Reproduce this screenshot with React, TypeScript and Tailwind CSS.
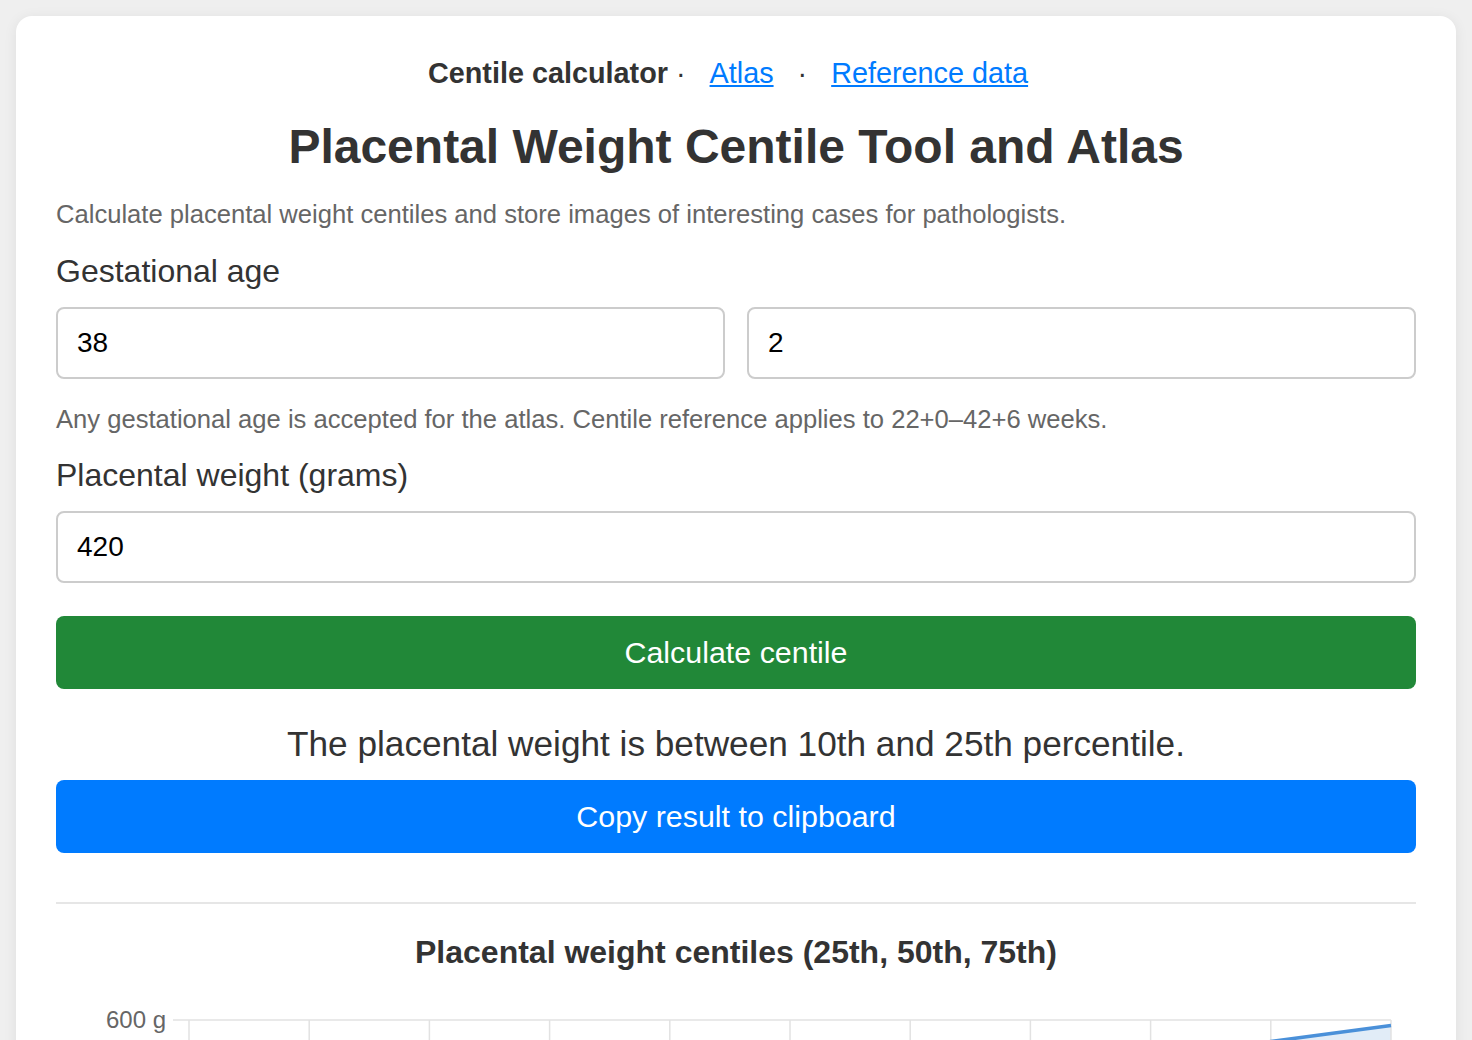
import React from 'react';

const FONT = "font-['Liberation_Sans',Arial,sans-serif]";

// chart geometry (svg coordinates, content box starts at x=56 on the page)
const X0 = 133;
const STEP = 120.2;
const TOP = 30;
const K = 0.8; // px per gram

const weeks = [22, 24, 26, 28, 30, 32, 34, 36, 38, 40, 41, 42];
const p25 = [120, 150, 180, 215, 255, 295, 340, 385, 430, 470, 482, 495];
const p50 = [145, 180, 215, 255, 300, 345, 390, 435, 480, 520, 532, 545];
const p75 = [175, 215, 255, 300, 350, 400, 445, 495, 540, 573, 583, 593];

const xOf = (w: number) => X0 + ((w - 22) / 2) * STEP;
const yOf = (g: number) => TOP + (600 - g) * K;

const pts = (arr: number[]) => arr.map((g, i) => `${xOf(weeks[i])},${yOf(g)}`).join(' ');

const Chart = () => {
    const band =
        pts(p75) +
        ' ' +
        p25
            .map((g, i) => `${xOf(weeks[i])},${yOf(g)}`)
            .reverse()
            .join(' ');
    return (
        <svg width="1360" height="420" viewBox="0 0 1360 420" className="block mt-[20px]">
            <polygon points={band} fill="#e1ecf7"/>
            {Array.from({length: 11}).map((_, i) => (
                <line key={i} x1={X0 + i * STEP} x2={X0 + i * STEP} y1={TOP} y2={400} stroke="#e2e2e2" strokeWidth="1.5"/>
            ))}
            <line x1={117} x2={X0 + 10 * STEP} y1={TOP} y2={TOP} stroke="#e2e2e2" strokeWidth="1.5"/>
            <text x={110} y={TOP + 7.5} textAnchor="end" fontSize="24" fill="#666" fontFamily="Liberation Sans, Arial, sans-serif">600 g</text>
            <polyline points={pts(p25)} fill="none" stroke="#4a90d9" strokeWidth="3.5"/>
            <polyline points={pts(p50)} fill="none" stroke="#4a90d9" strokeWidth="3.5"/>
            <polyline points={pts(p75)} fill="none" stroke="#4a90d9" strokeWidth="3.5"/>
        </svg>
    );
};

const App = () => {
    return (
        <div className={`min-h-screen bg-[#efefef] pt-4 px-4 ${FONT} text-[#333]`}>
            <div className="bg-white rounded-2xl shadow-[0_2px_14px_rgba(0,0,0,0.07)] px-10 pt-[41px] pb-10">
                <div className="text-center text-[28.8px] leading-[32px]">
                    <strong className="font-bold">Centile calculator</strong>
                    {' · '}
                    <a href="#" className="mx-[16px] text-[#007bff] underline">Atlas</a>
                    {' · '}
                    <a href="#" className="mx-[16px] text-[#007bff] underline">Reference data</a>
                </div>

                <h1 className="mt-[30px] text-center text-[48px] leading-[56px] font-bold">
                    Placental Weight Centile Tool and Atlas
                </h1>

                <p className="mt-[25px] text-[25.6px] leading-[28px] text-[#666]">
                    Calculate placental weight centiles and store images of interesting cases for pathologists.
                </p>

                <label className="block mt-[25px] text-[32px] leading-[36px]">Gestational age</label>
                <div className="mt-[18px] grid grid-cols-2 gap-[22px]">
                    <input
                        defaultValue="38"
                        className="h-[72px] rounded-lg border-2 border-[#cccccc] pl-[19px] text-[28px] text-black outline-none"
                    />
                    <input
                        defaultValue="2"
                        className="h-[72px] rounded-lg border-2 border-[#cccccc] pl-[19px] text-[28px] text-black outline-none"
                    />
                </div>
                <p className="mt-[26px] text-[25.6px] leading-[28px] text-[#666]">
                    Any gestational age is accepted for the atlas. Centile reference applies to 22+0–42+6 weeks.
                </p>

                <label className="block mt-[24px] text-[32px] leading-[36px]">Placental weight (grams)</label>
                <input
                    defaultValue="420"
                    className="mt-[18px] block w-full h-[72px] rounded-lg border-2 border-[#cccccc] pl-[19px] text-[28px] text-black outline-none"
                />

                <button className="mt-[33px] w-full h-[73px] rounded-lg bg-[#218838] text-white text-[30.4px]">
                    Calculate centile
                </button>

                <p className="mt-[35px] text-center text-[35.2px] leading-[40px]">
                    The placental weight is between 10th and 25th percentile.
                </p>

                <button className="mt-[16px] w-full h-[73px] rounded-lg bg-[#007bff] text-white text-[30.4px]">
                    Copy result to clipboard
                </button>

                <hr className="mt-[49px] border-0 h-[2px] bg-[#e6e6e6]"/>

                <h2 className="mt-[30px] text-center text-[32px] leading-[36px] font-bold">
                    Placental weight centiles (25th, 50th, 75th)
                </h2>

                <Chart/>
            </div>
        </div>
    );
};

export default App;
